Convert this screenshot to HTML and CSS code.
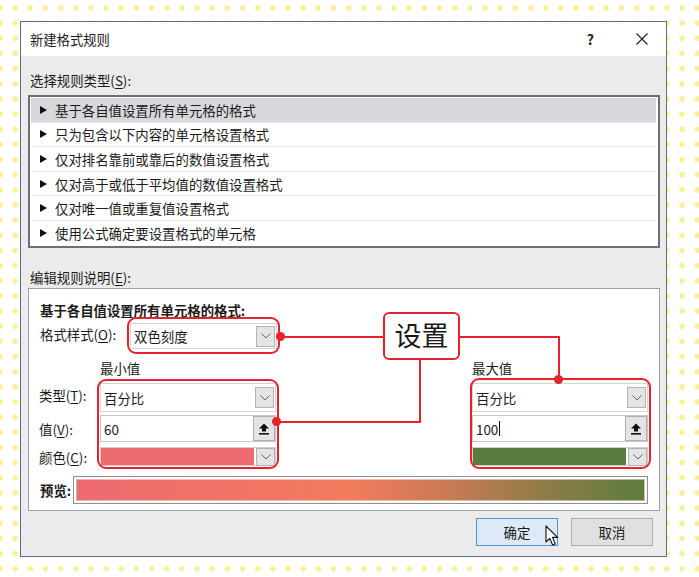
FILE: index.html
```html
<!DOCTYPE html>
<html lang="zh-CN">
<head>
<meta charset="utf-8">
<title>新建格式规则</title>
<link rel="stylesheet" href="styles.css">
</head>
<body>
<div class="dialog">
  <div class="titlebar">
    <span class="title">新建格式规则</span>
    <span class="help">?</span>
    <span class="close"><svg width="12" height="12" viewBox="0 0 12 12"><path d="M0.5 0.5L11.5 11.5M11.5 0.5L0.5 11.5" stroke="#222" stroke-width="1.2" fill="none"/></svg></span>
  </div>
  <div class="content">
    <div class="label">选择规则类型(<u>S</u>):</div>
    <div class="listbox">
      <div class="item selected"><span class="tri"></span>基于各自值设置所有单元格的格式</div>
      <div class="item"><span class="tri"></span>只为包含以下内容的单元格设置格式</div>
      <div class="item"><span class="tri"></span>仅对排名靠前或靠后的数值设置格式</div>
      <div class="item"><span class="tri"></span>仅对高于或低于平均值的数值设置格式</div>
      <div class="item"><span class="tri"></span>仅对唯一值或重复值设置格式</div>
      <div class="item last"><span class="tri"></span>使用公式确定要设置格式的单元格</div>
    </div>
    <div class="label label2">编辑规则说明(<u>E</u>):</div>
    <div class="panel">
      <div class="heading">基于各自值设置所有单元格的格式:</div>
      <div class="style-row">
        <span class="style-label">格式样式(<u>O</u>):</span>
        <div class="combo style-combo"><span class="val">双色刻度</span><span class="dd"><svg width="10" height="6" viewBox="0 0 10 6"><path d="M0.5 0.5L5 5L9.5 0.5" stroke="#666" stroke-width="1" fill="none"/></svg></span></div>
      </div>
      <div class="grid">
        <div></div><div class="colhead">最小值</div><div></div><div class="colhead">最大值</div>

        <div class="rl r2">类型(<u>T</u>):</div>
        <div class="combo type-combo"><span class="val">百分比</span><span class="dd"><svg width="10" height="6" viewBox="0 0 10 6"><path d="M0.5 0.5L5 5L9.5 0.5" stroke="#666" stroke-width="1" fill="none"/></svg></span></div>
        <div></div>
        <div class="combo type-combo"><span class="val">百分比</span><span class="dd"><svg width="10" height="6" viewBox="0 0 10 6"><path d="M0.5 0.5L5 5L9.5 0.5" stroke="#666" stroke-width="1" fill="none"/></svg></span></div>

        <div class="rl r3">值(<u>V</u>):</div>
        <div class="input"><span class="val">60</span><span class="spin"><svg width="12" height="12" viewBox="0 0 12 12"><path d="M6 0.5L11 5.5H8V8.5H4V5.5H1Z" fill="#111"/><rect x="1" y="10" width="10" height="1.6" fill="#111"/></svg></span></div>
        <div></div>
        <div class="input"><span class="val">100<span class="caret"></span></span><span class="spin"><svg width="12" height="12" viewBox="0 0 12 12"><path d="M6 0.5L11 5.5H8V8.5H4V5.5H1Z" fill="#111"/><rect x="1" y="10" width="10" height="1.6" fill="#111"/></svg></span></div>

        <div class="rl r4">颜色(<u>C</u>):</div>
        <div class="colorbox"><span class="swatch red"></span><span class="dd"><svg width="10" height="6" viewBox="0 0 10 6"><path d="M0.5 0.5L5 5L9.5 0.5" stroke="#666" stroke-width="1" fill="none"/></svg></span></div>
        <div></div>
        <div class="colorbox"><span class="swatch green"></span><span class="dd"><svg width="10" height="6" viewBox="0 0 10 6"><path d="M0.5 0.5L5 5L9.5 0.5" stroke="#666" stroke-width="1" fill="none"/></svg></span></div>
      </div>
      <div class="preview-row">
        <span class="pl">预览:</span>
        <div class="preview"><div class="grad"></div></div>
      </div>
    </div>
    <div class="buttons">
      <button class="btn ok">确定</button>
      <button class="btn cancel">取消</button>
    </div>
  </div>
</div>

<div class="annot">
  <div class="rbox rb-style"></div>
  <div class="rbox rb-min"></div>
  <div class="rbox rb-max"></div>
  <div class="hline hl-1"></div>
  <div class="hline hl-2"></div>
  <div class="vline vl-1"></div>
  <div class="vline vl-2"></div>
  <div class="hline hl-3"></div>
  <div class="dot d1"></div>
  <div class="dot d2"></div>
  <div class="dot d3"></div>
  <div class="tag">设置</div>
  <svg class="cursor" width="14" height="22" viewBox="0 0 14 22"><path d="M1 1V17L4.8 13.4L7.6 20L10.2 18.9L7.5 12.4H12.6Z" fill="#fff" stroke="#111" stroke-width="1.1" stroke-linejoin="round"/></svg>
</div>
</body>
</html>
```

FILE: styles.css
```css
* { box-sizing: border-box; }
html, body { margin: 0; padding: 0; }
body {
  width: 699px;
  height: 577px;
  position: relative;
  overflow: hidden;
  background-color: #fff;
  background-image: radial-gradient(circle at 7.585px 7.585px, #fcef91 2.4px, rgba(252,239,145,0) 3px);
  background-size: 15.17px 15.17px;
  background-position: -7.585px 0.4px;
  font-family: "Noto Sans CJK SC", "Microsoft YaHei", sans-serif;
  font-size: 13.4px;
  color: #1b1b1b;
}
u { text-decoration: underline; text-underline-offset: 2px; }

.dialog {
  position: absolute;
  left: 20px;
  top: 21px;
  width: 647px;
  height: 536px;
  border: 1px solid #5e6e80;
  background: #ebebeb;
}
.titlebar {
  height: 34px;
  background: #fff;
  display: flex;
  align-items: center;
  padding-left: 9px;
}
.title { font-size: 13.3px; flex: 1; }
.help { font-weight: bold; font-size: 14px; margin-right: 42px; color: #222; }
.close { width: 12px; height: 12px; display: flex; margin-right: 18px; }

.content { padding: 0 6px 0 7px; }
.label { line-height: 18px; margin-top: 15px; padding-left: 2px; }
.label2 { margin-top: 20px; }

.listbox {
  margin-top: 6px;
  height: 153px;
  border: 2px solid #6c6e71;
  background: #fff;
  padding: 1px 2px 1px 1px;
}
.item {
  height: 24.6px;
  display: flex;
  align-items: center;
  padding-left: 9px;
  border-bottom: 1px solid #ececec;
}
.item.last { border-bottom: none; }
.item.selected { background: #d8d8dc; border-bottom-color: #e4e4e8; }
.tri {
  width: 0; height: 0;
  border-left: 7px solid #111;
  border-top: 4px solid transparent;
  border-bottom: 4px solid transparent;
  margin-right: 8px;
}

.panel {
  margin-top: 2px;
  height: 223px;
  background: #fff;
  border: 1px solid #9aa3ad;
  padding: 12px 11px 0 11px;
}
.heading { font-weight: bold; line-height: 18px; }
.style-row { display: flex; align-items: center; margin-top: 4px; height: 26px; }
.style-label { width: 90px; margin-top: -4px; }

.combo, .input, .colorbox {
  position: relative;
  display: flex;
  align-items: center;
  background: #fff;
  border: 1px solid #d4d4d4;
}
.style-combo { width: 147px; height: 26px; }
.val { flex: 1; padding-left: 3px; display: flex; align-items: center; }
.dd {
  width: 19px;
  height: 21px;
  margin-right: 1px;
  background: #e4e4e4;
  border: 1px solid #b4b4b4;
  display: flex;
  align-items: center;
  justify-content: center;
}

.grid {
  display: grid;
  grid-template-columns: 60px 176px 1fr 176px;
  grid-template-rows: 18px 35px 30px 24px;
  margin-top: 10px;
}
.grid > * { align-self: end; }
.colhead { line-height: 18px; }
.rl { display: flex; align-items: center; margin-left: -1px; }
.rl.r2 { height: 29px; margin-bottom: 3px; }
.rl.r3 { height: 27px; margin-bottom: 0; }
.rl.r4 { height: 19px; margin-bottom: 0; }
.type-combo { height: 29px; }
.type-combo .dd { height: 21px; }
.input { height: 27px; border-color: #c8c8c8; }
.spin {
  width: 22px;
  height: 25px;
  background: #e4e4e4;
  border: 1px solid #b0b0b0;
  display: flex;
  align-items: center;
  justify-content: center;
}
.caret { display: inline-block; width: 1px; height: 15px; background: #111; margin-left: 1px; }
.colorbox { height: 19px; border-color: #d0d0d0; }
.swatch { flex: 1; height: 17px; margin-right: 2px; }
.swatch.red { background: #ee6b6f; }
.swatch.green { background: #5a7a3f; }
.colorbox .dd { height: 18px; margin-right: 0; }

.preview-row { display: flex; align-items: center; margin-top: 10px; height: 28px; }
.pl { font-weight: bold; width: 33px; }
.preview {
  flex: 1;
  height: 28px;
  border: 1px solid #8e8e8e;
  padding: 2px;
  background: #fff;
}
.grad {
  height: 100%;
  border: 1px solid rgba(255,255,255,0.5);
  background: linear-gradient(to right, #ee6a71 0%, #f27b5d 48%, #c77a55 66%, #8d7c47 83%, #5c7d3c 100%);
}

.buttons { display: flex; justify-content: flex-end; gap: 13px; margin-top: 7px; padding-right: 7px; }
.btn {
  width: 82px;
  height: 28px;
  font-family: inherit;
  font-size: 13.4px;
  color: #1b1b1b;
  padding: 0;
}
.ok { background: #dce9f6; border: 1px solid #4d95da; }
.cancel { background: #e0e0e0; border: 1px solid #adadad; }

.annot { position: absolute; left: 0; top: 0; width: 699px; height: 577px; pointer-events: none; }
.rbox { position: absolute; border: 2.5px solid #e8222c; border-radius: 9px; }
.rb-style { left: 127px; top: 317px; width: 153px; height: 37px; }
.rb-min { left: 97px; top: 379px; width: 182px; height: 90px; }
.rb-max { left: 470px; top: 378px; width: 181px; height: 91px; }
.hline { position: absolute; height: 2px; background: #e8222c; }
.vline { position: absolute; width: 2px; background: #e8222c; }
.hl-1 { left: 281px; top: 336px; width: 103px; }
.hl-2 { left: 459px; top: 336px; width: 101px; }
.vl-1 { left: 558px; top: 336px; height: 44px; }
.vl-2 { left: 419px; top: 359px; height: 64px; }
.hl-3 { left: 277px; top: 421px; width: 144px; }
.dot { position: absolute; width: 9px; height: 9px; border-radius: 50%; background: #e8222c; }
.d1 { left: 276px; top: 332px; }
.d2 { left: 554px; top: 375px; }
.d3 { left: 272px; top: 417px; }
.tag {
  position: absolute;
  left: 383px;
  top: 312px;
  width: 77px;
  height: 48px;
  background: #fff;
  border: 2.5px solid #e8222c;
  border-radius: 6px;
  font-size: 27px;
  line-height: 42px;
  text-align: center;
  color: #1a1a1a;
}
.cursor { position: absolute; left: 545px; top: 525px; }
```
